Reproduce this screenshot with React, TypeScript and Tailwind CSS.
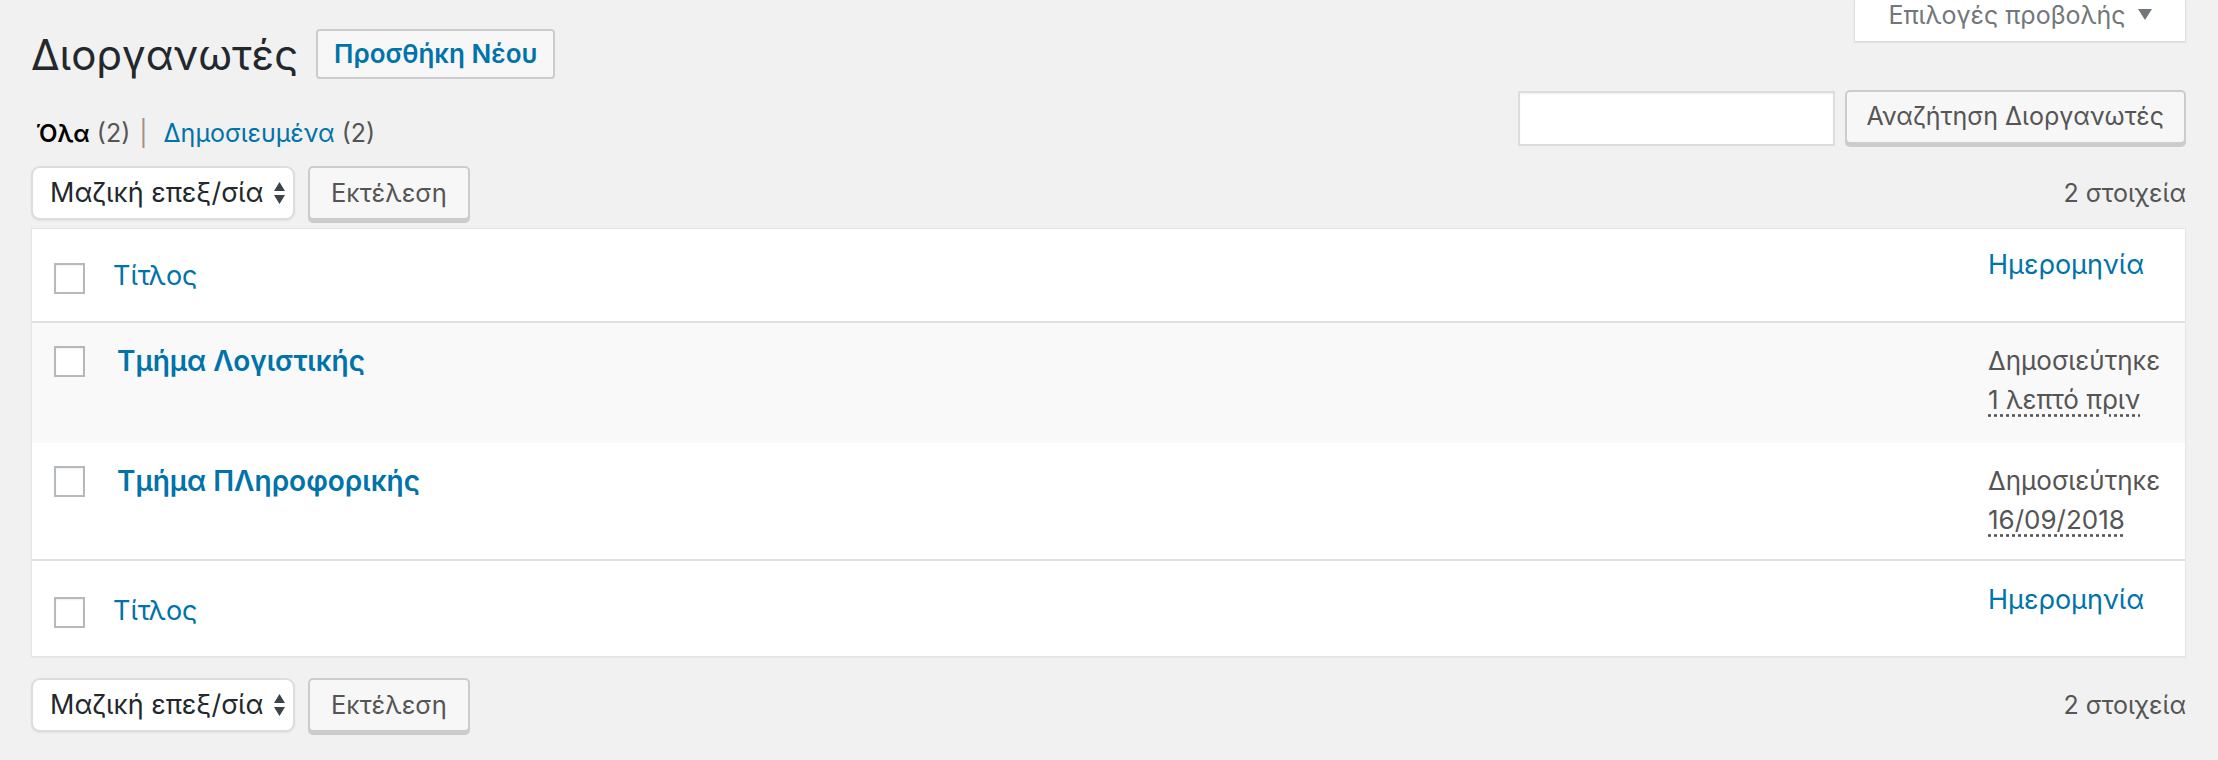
import React from 'react';

const font = { fontFamily: 'Inter, "Noto Sans", sans-serif' };

function Checkbox() {
  return (
    <div className="h-[31px] w-[31px] border-2 border-[#b4b9be] bg-white shadow-[inset_0_1px_2px_rgba(0,0,0,0.07)]" />
  );
}

function SelectArrows() {
  return (
    <svg width="13" height="24" viewBox="0 0 13 24" className="shrink-0">
      <path d="M6.5 1 L12 10 L1 10 Z" fill="#3c434a" />
      <path d="M1 14 L12 14 L6.5 23 Z" fill="#3c434a" />
    </svg>
  );
}

function BulkActions() {
  return (
    <div className="flex items-center gap-[13px]">
      <div className="flex h-[54px] w-[264px] items-center justify-between rounded-[9px] border-2 border-[#ddd] bg-white pl-[17px] pr-[7px] text-[27px] text-[#23282d] shadow-[0_1px_2px_rgba(0,0,0,0.07)]">
        <span>Μαζική επεξ/σία</span>
        <SelectArrows />
      </div>
      <button className="h-[54px] rounded-[5px] border-2 border-[#ccc] bg-[#f7f7f7] px-[21px] text-[25.5px] text-[#555] shadow-[0_3px_0_#ccc]">
        Εκτέλεση
      </button>
    </div>
  );
}

function TableRow({
  title,
  when,
  shaded,
}: {
  title: string;
  when: string;
  shaded?: boolean;
}) {
  return (
    <div className={`flex ${shaded ? 'h-[120px] bg-[#f9f9f9]' : 'h-[118px] border-b-2 border-[#e1e1e1] bg-white'}`}>
      <div className="w-[85px] shrink-0 pl-[22px] pt-[23px]">
        <Checkbox />
      </div>
      <div className="flex-1 pt-[20px]">
        <a className="text-[28px] font-semibold leading-[36px] text-[#0073aa]">{title}</a>
      </div>
      <div className="w-[197px] shrink-0 pt-[18px] text-[26px] leading-[39px] text-[#555]">
        <div>Δημοσιεύτηκε</div>
        <div>
          <span className="underline decoration-dotted decoration-[#555] underline-offset-[5px]">{when}</span>
        </div>
      </div>
    </div>
  );
}

export default function App() {
  return (
    <div className="h-[760px] w-full overflow-hidden bg-[#f1f1f1]" style={font}>
      <div className="pl-[31px] pr-[32px]">
        {/* top: title + filters on the left, screen options + search on the right */}
        <div className="flex justify-between">
          <div className="flex flex-col">
            <div className="flex items-start">
              <h1 className="mt-[27px] text-[42px] font-normal leading-[56px] text-[#23282d]">Διοργανωτές</h1>
              <a className="ml-[18px] mt-[29px] h-[50px] rounded-[4px] border-2 border-[#ccc] bg-[#f7f7f7] px-[16px] text-[26px] font-semibold leading-[46px] text-[#0073aa]">
                Προσθήκη Νέου
              </a>
            </div>
            <div className="mt-[32px] pl-[5px] text-[25px] leading-[36px]">
              <span className="text-[24px] font-semibold text-black">Όλα</span>
              <span className="text-[#555]"> (2)</span>
              <span className="ml-[9px] mr-[16px] text-[#a38f88]">|</span>
              <a className="text-[#0073aa]">Δημοσιευμένα</a>
              <span className="text-[#555]"> (2)</span>
            </div>
          </div>
          <div className="flex flex-col items-end">
            <div className="flex h-[42px] w-[332px] items-start justify-center gap-[12px] border-x border-b border-[#ddd] bg-white shadow-[0_1px_1px_rgba(0,0,0,0.06)]">
              <span className="text-[25px] leading-[30px] text-[#72777c]">Επιλογές προβολής</span>
              <svg width="14" height="11" viewBox="0 0 14 11" className="mt-[9px]">
                <path d="M0 0 L14 0 L7 11 Z" fill="#72777c" />
              </svg>
            </div>
            <div className="mt-[48px] flex items-start gap-[10px]">
              <div className="mt-[1px] h-[55px] w-[317px] border-2 border-[#ddd] bg-white shadow-[inset_0_1px_2px_rgba(0,0,0,0.07)]" />
              <button className="h-[54px] rounded-[5px] border-2 border-[#ccc] bg-[#f7f7f7] px-[20px] text-[25px] text-[#555] shadow-[0_3px_0_#ccc]">
                Αναζήτηση Διοργανωτές
              </button>
            </div>
          </div>
        </div>

        {/* top tablenav */}
        <div className="mt-[14px] flex h-[56px] items-start justify-between">
          <BulkActions />
          <span className="mt-[12px] text-[25px] leading-[30px] text-[#555]">2 στοιχεία</span>
        </div>

        {/* list table */}
        <div className="mt-[6px] border border-[#e5e5e5] bg-white shadow-[0_1px_1px_rgba(0,0,0,0.04)]">
          <div className="flex h-[94px] border-b-2 border-[#e1e1e1]">
            <div className="w-[81px] shrink-0 pl-[22px] pt-[34px]">
              <Checkbox />
            </div>
            <div className="flex-1 pt-[29px]">
              <a className="text-[27px] leading-[36px] text-[#0073aa]">Τίτλος</a>
            </div>
            <div className="w-[197px] shrink-0 pt-[18px]">
              <a className="text-[27px] leading-[36px] text-[#0073aa]">Ημερομηνία</a>
            </div>
          </div>
          <TableRow title="Τμήμα Λογιστικής" when="1 λεπτό πριν" shaded />
          <TableRow title="Τμήμα ΠΛηροφορικής" when="16/09/2018" />
          <div className="flex h-[95px]">
            <div className="w-[81px] shrink-0 pl-[22px] pt-[36px]">
              <Checkbox />
            </div>
            <div className="flex-1 pt-[32px]">
              <a className="text-[27px] leading-[36px] text-[#0073aa]">Τίτλος</a>
            </div>
            <div className="w-[197px] shrink-0 pt-[21px]">
              <a className="text-[27px] leading-[36px] text-[#0073aa]">Ημερομηνία</a>
            </div>
          </div>
        </div>

        {/* bottom tablenav */}
        <div className="mt-[21px] flex h-[56px] items-start justify-between">
          <BulkActions />
          <span className="mt-[12px] text-[25px] leading-[30px] text-[#555]">2 στοιχεία</span>
        </div>
      </div>
    </div>
  );
}
